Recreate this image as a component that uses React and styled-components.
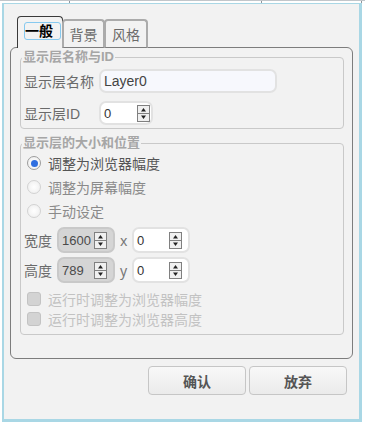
import React from "react";
import styled, { createGlobalStyle } from "styled-components";

const GlobalStyle = createGlobalStyle`
  body {
    margin: 0;
    background: #fff;
    font-family: "Liberation Sans", "Noto Sans CJK SC", sans-serif;
  }
`;

const Page = styled.div`
  width: 365px;
  height: 425px;
  overflow: hidden;
  background: #fff;
`;

const Backdrop = styled.div`
  height: 3px;
  display: flex;
  box-sizing: border-box;
  border-top: 1px solid #c2c6ca;
`;

const BackCell = styled.div`
  width: ${(p) => p.$w}px;
  border-right: 1px solid #8e959b;
`;

const Dialog = styled.div`
  box-sizing: border-box;
  margin-left: 2px;
  width: 360px;
  height: 419px;
  background: #f2f2f2;
  border: solid #a9d7e5;
  border-width: 1px 3px 3px 2px;
  padding: 12px 6px 0 6px;
`;

const TabBar = styled.div`
  display: flex;
  align-items: flex-end;
  height: 32px;
  margin: 0 0 -1px 7px;
  position: relative;
  z-index: 1;
`;

const Tab = styled.div`
  box-sizing: border-box;
  width: ${(p) => p.$w}px;
  height: ${(p) => (p.$active ? 32 : 29)}px;
  background: #f2f2f2;
  border: ${(p) => (p.$active ? "1px solid #3a3a3a" : "2px solid #ababab")};
  border-bottom: ${(p) => (p.$active ? "none" : "1px solid #7d7d7d")};
  border-radius: 4px 4px 0 0;
  display: flex;
  align-items: center;
  justify-content: ${(p) => (p.$active ? "flex-start" : "center")};
  padding-left: ${(p) => (p.$active ? 6 : 0)}px;
  padding-bottom: ${(p) => (p.$active ? 3 : 0)}px;
  font-size: 14px;
  font-weight: ${(p) => (p.$active ? 700 : 400)};
  color: ${(p) => (p.$active ? "#000" : "#6a6a6a")};
  margin-left: ${(p) => (p.$active ? 0 : -1)}px;
`;

const Focus = styled.span`
  box-sizing: border-box;
  width: 37px;
  height: 18px;
  border: 1px solid #86c9ef;
  border-radius: 3px;
  display: flex;
  align-items: center;
  line-height: 1;
`;

const Panel = styled.div`
  box-sizing: border-box;
  width: 343px;
  height: 312px;
  border: 1px solid #7d7d7d;
  border-radius: 6px;
  padding: 2px 8px 0 9px;
`;

const Group = styled.fieldset`
  margin: ${(p) => p.$mt || 0}px 0 0 0;
  padding: 0 0 ${(p) => p.$pb}px 3px;
  border: 1px solid #c9c9c9;
  border-radius: 4px;
  min-width: 0;
`;

const Legend = styled.legend`
  padding: 0 1px;
  margin-left: -2px;
  font-size: 13px;
  line-height: 14px;
  font-weight: 700;
  color: #a6a6a6;
`;

const Row = styled.div`
  display: flex;
  align-items: center;
  height: ${(p) => p.$h}px;
  margin-top: ${(p) => p.$mt || 0}px;
  padding-left: ${(p) => p.$pl || 0}px;
`;

const Label = styled.span`
  width: ${(p) => p.$w}px;
  flex: none;
  font-size: 14px;
  color: #6a6a6a;
  white-space: nowrap;
`;

const TextInput = styled.input`
  box-sizing: border-box;
  width: 178px;
  height: 24px;
  margin: 0;
  border: 2px solid #e2e2e2;
  border-radius: 7px;
  background: #f7f8fd;
  padding: 0 0 0 3px;
  font-family: "Liberation Sans", sans-serif;
  font-size: 14px;
  color: #444;
  outline: none;
`;

const SpinBox = styled.div`
  box-sizing: border-box;
  display: flex;
  align-items: center;
  width: ${(p) => p.$w}px;
  height: ${(p) => p.$h}px;
  border: 2px solid ${(p) => (p.$disabled ? "#c9c9c9" : "#e2e2e2")};
  border-radius: 7px;
  background: ${(p) => (p.$disabled ? "#d5d5d5" : "#fff")};
  padding: 0 ${(p) => p.$pr}px 0 3px;
  font-family: "Liberation Sans", sans-serif;
  font-size: 13px;
  color: ${(p) => (p.$disabled ? "#4a4a4a" : "#333")};
`;

const SpinValue = styled.span`
  flex: 1;
`;

const Axis = styled.span`
  width: 7px;
  margin: 0 5px;
  font-family: "Noto Sans", sans-serif;
  font-size: 14px;
  color: #777;
`;

const RadioDot = styled.span`
  box-sizing: border-box;
  width: 14px;
  height: 14px;
  border-radius: 50%;
  border: 1px solid ${(p) => (p.$on ? "#9c9c9c" : "#d2d2d2")};
  background: radial-gradient(circle, #fff 0%, #ececec 100%);
  display: flex;
  align-items: center;
  justify-content: center;
  margin-right: 7px;
  &::after {
    content: "";
    width: 7px;
    height: 7px;
    border-radius: 50%;
    background: ${(p) => (p.$on ? "#2e6ee0" : "transparent")};
  }
`;

const OptionText = styled.span`
  font-size: 14px;
  color: ${(p) => (p.$dim ? "#8a8a8a" : "#555")};
`;

const CheckBox = styled.span`
  box-sizing: border-box;
  width: 14px;
  height: 14px;
  border-radius: 3px;
  border: 1px solid #c3c3c3;
  background: #d3d3d3;
  margin-right: 7px;
`;

const CheckText = styled.span`
  font-size: 14px;
  color: #c2c2c2;
`;

const ButtonRow = styled.div`
  display: flex;
  justify-content: flex-end;
  gap: 3px;
  width: 343px;
  box-sizing: border-box;
  padding-right: 6px;
  margin-top: 7px;
`;

const Button = styled.button`
  box-sizing: border-box;
  width: 98px;
  height: 29px;
  border: 1px solid #c6c6c6;
  border-radius: 4px;
  background: linear-gradient(#f8f8f8, #ebebeb);
  font-family: "Noto Sans CJK SC", sans-serif;
  font-size: 14px;
  font-weight: 700;
  color: #555;
  padding: 0;
`;

const Spinner = () => (
  <svg width="13" height="17" viewBox="0 0 13 17">
    <rect x="0.5" y="0.5" width="12" height="16" fill="#f0f0f0" stroke="#808080" />
    <line x1="1" y1="8.5" x2="12" y2="8.5" stroke="#808080" />
    <path d="M6.5 3 L9 6.5 H4 Z" fill="#222" />
    <path d="M6.5 14 L9 10.5 H4 Z" fill="#222" />
  </svg>
);

const Spin = ({ value, w, h, pr, disabled }) => (
  <SpinBox $w={w} $h={h} $pr={pr} $disabled={disabled}>
    <SpinValue>{value}</SpinValue>
    <Spinner />
  </SpinBox>
);

const App = () => {
  return (
    <Page>
      <GlobalStyle />
      <Backdrop>
        <BackCell $w={69} />
        <BackCell $w={191} />
        <BackCell $w={99} />
      </Backdrop>
      <Dialog>
        <TabBar>
          <Tab $active $w={46}>
            <Focus>一般</Focus>
          </Tab>
          <Tab $w={43}>背景</Tab>
          <Tab $w={44}>风格</Tab>
        </TabBar>
        <Panel>
          <Group $pb={3}>
            <Legend>显示层名称与ID</Legend>
            <Row $h={24} $mt={5}>
              <Label $w={75}>显示层名称</Label>
              <TextInput defaultValue="Layer0" readOnly />
            </Row>
            <Row $h={24} $mt={8}>
              <Label $w={75}>显示层ID</Label>
              <Spin value="0" w={54} h={24} pr={1} />
            </Row>
          </Group>
          <Group $mt={7} $pb={5}>
            <Legend>显示层的大小和位置</Legend>
            <Row $h={24} $mt={1} $pl={3}>
              <RadioDot $on />
              <OptionText>调整为浏览器幅度</OptionText>
            </Row>
            <Row $h={24} $pl={3}>
              <RadioDot />
              <OptionText $dim>调整为屏幕幅度</OptionText>
            </Row>
            <Row $h={24} $pl={3}>
              <RadioDot />
              <OptionText $dim>手动设定</OptionText>
            </Row>
            <Row $h={26} $mt={4}>
              <Label $w={33}>宽度</Label>
              <Spin value="1600" w={58} h={26} pr={6} disabled />
              <Axis>x</Axis>
              <Spin value="0" w={58} h={26} pr={6} />
            </Row>
            <Row $h={26} $mt={4}>
              <Label $w={33}>高度</Label>
              <Spin value="789" w={58} h={26} pr={6} disabled />
              <Axis>y</Axis>
              <Spin value="0" w={58} h={26} pr={6} />
            </Row>
            <Row $h={20} $mt={6} $pl={3}>
              <CheckBox />
              <CheckText>运行时调整为浏览器幅度</CheckText>
            </Row>
            <Row $h={20} $pl={3}>
              <CheckBox />
              <CheckText>运行时调整为浏览器高度</CheckText>
            </Row>
          </Group>
        </Panel>
        <ButtonRow>
          <Button>确认</Button>
          <Button>放弃</Button>
        </ButtonRow>
      </Dialog>
    </Page>
  );
};

export default App;
